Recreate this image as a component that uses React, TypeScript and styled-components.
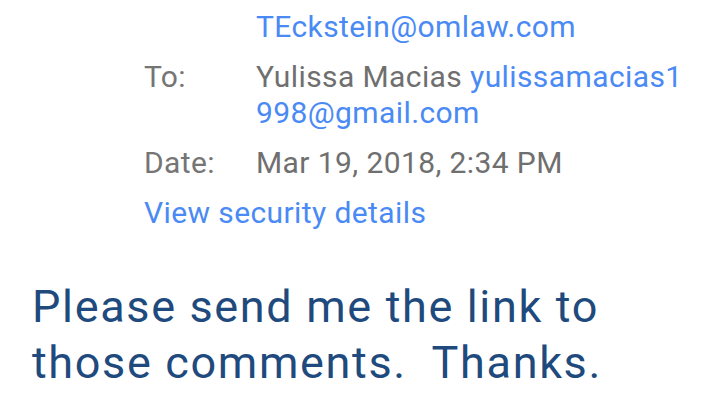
import styled, { createGlobalStyle } from 'styled-components';

const GlobalStyle = createGlobalStyle`
  html, body {
    margin: 0;
    padding: 0;
    background: #ffffff;
  }
  body {
    font-family: Roboto, "Noto Sans", "Liberation Sans", sans-serif;
    -webkit-font-smoothing: antialiased;
  }
`;

const Page = styled.div`
  width: 720px;
  height: 405px;
  overflow: hidden;
  background: #ffffff;
`;

const Header = styled.div`
  margin-top: -31px;
  padding-left: 144px;
  display: flex;
  flex-direction: column;
  gap: 14px;
`;

const Row = styled.div`
  display: grid;
  grid-template-columns: 112px 440px;
  font-size: 30px;
  line-height: 36px;
  letter-spacing: 0.4px;
  color: #757575;
`;

const Label = styled.div<{ $tall?: boolean }>`
  color: #757575;
  line-height: ${(p) => (p.$tall ? '40px' : '36px')};
`;

const Value = styled.div<{ $breakAll?: boolean }>`
  color: #6f6f6f;
  word-break: ${(p) => (p.$breakAll ? 'break-all' : 'normal')};
`;

const NameLine = styled.div`
  line-height: 40px;
`;

const Link = styled.span<{ $block?: boolean }>`
  display: ${(p) => (p.$block ? 'block' : 'inline')};
  color: #4a8af4;
`;

const SecurityLink = styled.div`
  font-size: 30px;
  line-height: 36px;
  letter-spacing: 0.4px;
  color: #4a8af4;
`;

const Message = styled.p`
  margin: 48px 0 0;
  padding-left: 32px;
  width: 680px;
  font-size: 45px;
  line-height: 56px;
  letter-spacing: 1.65px;
  color: #1f4a7d;
  white-space: pre-wrap;
`;

export default function App(): JSX.Element {
  return (
    <Page>
      <GlobalStyle />
      <Header>
        <Row>
          <Label $tall>From:</Label>
          <Value>
            <NameLine>Tessa Eckstein</NameLine>
            <Link $block>TEckstein@omlaw.com</Link>
          </Value>
        </Row>
        <Row>
          <Label>To:</Label>
          <Value $breakAll>
            Yulissa Macias <Link>yulissamacias1998@gmail.com</Link>
          </Value>
        </Row>
        <Row>
          <Label>Date:</Label>
          <Value>Mar 19, 2018, 2:34 PM</Value>
        </Row>
        <SecurityLink>View security details</SecurityLink>
      </Header>
      <Message>{'Please send me the link to\nthose comments.  Thanks.'}</Message>
    </Page>
  );
}
